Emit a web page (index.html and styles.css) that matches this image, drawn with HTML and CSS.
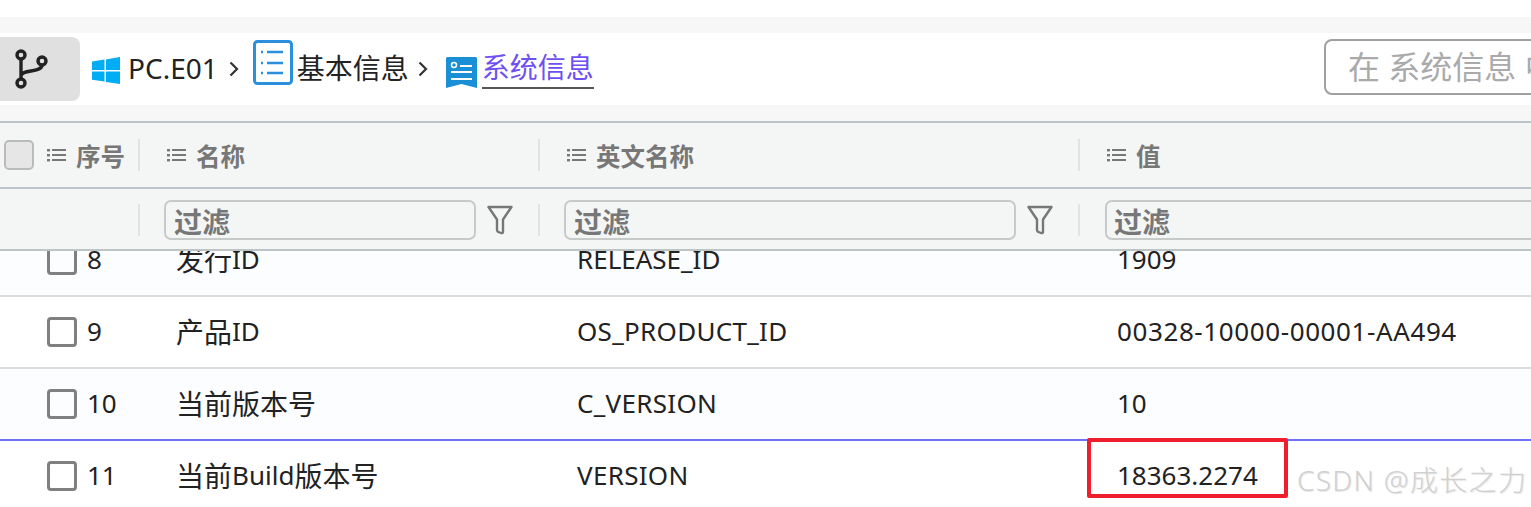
FILE: index.html
```html
<!DOCTYPE html>
<html>
  <head>
    <title>系统信息</title>
    <link rel="stylesheet" href="styles.css">
  </head>

  <body>
    <div class="toolbar">
      <div class="crumbs">
        <div class="branch-btn">
          <svg width="36" height="40" viewBox="0 0 36 40" fill="none" stroke="#222" stroke-width="3.4">
            <circle cx="8" cy="6" r="4" />
            <circle cx="8" cy="34" r="4" />
            <circle cx="29" cy="12" r="4" />
            <path d="M8 10V30M8 27C8 20 29 24 29 16" />
          </svg>
        </div>
        <svg class="win-icon" width="28" height="27" viewBox="0 0 28 27" fill="#00adf5">
          <path d="M0 4.5L12.5 2.6V13H0ZM14 2.4L28 0V13H14ZM0 14.5H12.5V24.6L0 22.8ZM14 14.5H28V27L14 25Z" />
        </svg>
        <span class="crumb">PC.E01</span>
        <svg class="chevron" width="10" height="16" viewBox="0 0 10 16" fill="none" stroke="#333" stroke-width="2.2">
          <path d="M1.5 1.5L8 8L1.5 14.5" />
        </svg>
        <svg class="list-icon" width="40" height="45" viewBox="0 0 40 45" fill="none" stroke="#2a8fdc">
          <rect x="1.5" y="1.5" width="37" height="42" rx="3" stroke-width="3" />
          <path d="M14 12H30M14 23H30M14 33H30" stroke-width="2.4" />
          <path d="M8 12H10M8 23H10M8 33H10" stroke-width="2.4" />
        </svg>
        <span class="crumb">基本信息</span>
        <svg class="chevron chevron-2" width="10" height="16" viewBox="0 0 10 16" fill="none" stroke="#333" stroke-width="2.2">
          <path d="M1.5 1.5L8 8L1.5 14.5" />
        </svg>
        <svg class="card-icon" width="31" height="31" viewBox="0 0 31 31">
          <path d="M0 1.5Q0 0 1.5 0H29.5Q31 0 31 1.5V31L15.500 27L0 31Z" fill="#1a8fd6" />
          <circle cx="8" cy="8" r="2.500" fill="none" stroke="#fff" stroke-width="1.500" />
          <path d="M14 9H26M5 15H26M5 22H26" stroke="#fff" stroke-width="1.800" />
        </svg>
        <span class="crumb current">系统信息</span>
      </div>
      <div class="search">在 系统信息 中搜索</div>
    </div>

    <div class="table">
      <div class="row head-row">
        <div class="cell first-cell">
          <span class="head-check"></span>
          <svg class="menu-icon" width="19" height="14" viewBox="0 0 19 14"><use href="#lines" /></svg>
          <span class="head-text">序号</span>
        </div>
        <div class="cell">
          <i class="sep"></i>
          <svg class="menu-icon pad" width="19" height="14" viewBox="0 0 19 14"><use href="#lines" /></svg>
          <span class="head-text">名称</span>
        </div>
        <div class="cell">
          <i class="sep"></i>
          <svg class="menu-icon pad" width="19" height="14" viewBox="0 0 19 14"><use href="#lines" /></svg>
          <span class="head-text">英文名称</span>
        </div>
        <div class="cell">
          <i class="sep"></i>
          <svg class="menu-icon pad" width="19" height="14" viewBox="0 0 19 14"><use href="#lines" /></svg>
          <span class="head-text">值</span>
        </div>
      </div>

      <div class="row filter-row">
        <div class="cell first-cell"></div>
        <div class="cell">
          <i class="sep"></i>
          <div class="filter-input">过滤</div>
          <svg class="funnel" width="26" height="30" viewBox="0 0 26 30"><use href="#funnel" /></svg>
        </div>
        <div class="cell">
          <i class="sep"></i>
          <div class="filter-input long">过滤</div>
          <svg class="funnel" width="26" height="30" viewBox="0 0 26 30"><use href="#funnel" /></svg>
        </div>
        <div class="cell">
          <i class="sep"></i>
          <div class="filter-input wide">过滤</div>
        </div>
      </div>

      <div class="rows">
        <div class="row data-row tint top-row">
          <div class="cell first-cell"><span class="check"></span><span class="en">8</span></div>
          <div class="cell text-cell">发行<span class="en">ID</span></div>
          <div class="cell text-cell en">RELEASE_ID</div>
          <div class="cell text-cell en">1909</div>
        </div>
        <div class="row data-row">
          <div class="cell first-cell"><span class="check"></span><span class="en">9</span></div>
          <div class="cell text-cell">产品<span class="en">ID</span></div>
          <div class="cell text-cell en loose">OS_PRODUCT_ID</div>
          <div class="cell text-cell en serial">00328-10000-00001-AA494</div>
        </div>
        <div class="row data-row tint hover">
          <div class="cell first-cell"><span class="check"></span><span class="en">10</span></div>
          <div class="cell text-cell">当前版本号</div>
          <div class="cell text-cell en loose">C_VERSION</div>
          <div class="cell text-cell en">10</div>
        </div>
        <div class="row data-row">
          <div class="cell first-cell"><span class="check"></span><span class="en">11</span></div>
          <div class="cell text-cell">当前<span class="en">Build</span>版本号</div>
          <div class="cell text-cell en loose">VERSION</div>
          <div class="cell text-cell en">18363.2274</div>
        </div>
      </div>
    </div>

    <div class="red-box"></div>
    <div class="watermark">CSDN @成长之力</div>

    <svg class="defs" width="0" height="0">
      <defs>
        <g id="lines" fill="#777">
          <rect x="0" y="1" width="3" height="2.400" />
          <rect x="0" y="6" width="3" height="2.400" />
          <rect x="0" y="11" width="3" height="2.400" />
          <rect x="5" y="1" width="14" height="2" />
          <rect x="5" y="6" width="14" height="2" />
          <rect x="5" y="11" width="14" height="2" />
        </g>
        <path id="funnel" d="M1.500 2H24.500L16 14.500V27Q16 28.500 14 28L11.500 27Q10 26.500 10 25V14.500Z" fill="none" stroke="#777" stroke-width="2.400" stroke-linejoin="round" />
      </defs>
    </svg>
  </body>
</html>
```

FILE: styles.css
```css
html,
body {
  margin: 0;
  height: 507px;
  overflow: hidden;
}

body {
  position: relative;
  padding-top: 17px;
  box-sizing: border-box;
  background: linear-gradient(#f7f7f7, #f7f7f7) 0 17px / 100% 104px no-repeat #fff;
  font-family: "Noto Sans", "Noto Sans CJK SC", sans-serif;
  font-size: 28px;
  color: #222;
}

.en {
  font-size: 26px;
}

.loose {
  letter-spacing: 0.3px;
}

.serial {
  letter-spacing: 0.6px;
}

.toolbar {
  display: flex;
  align-items: center;
  height: 72px;
  margin: 16px 0;
  background: #fff;
  overflow: hidden;
}

.crumbs {
  display: flex;
  flex: none;
  align-items: center;
  width: 1324px;
}

.branch-btn {
  display: flex;
  align-items: center;
  justify-content: center;
  width: 80px;
  height: 64px;
  padding-right: 18px;
  box-sizing: border-box;
  background: #e0e0e0;
  border-radius: 0 8px 8px 0;
}

.win-icon {
  margin: 2px 8px 0 12px;
}

.crumb {
  margin-bottom: 3px;
  line-height: 40px;
}

.chevron {
  margin: 0 14px 0 11px;
}

.chevron-2 {
  margin: 0 18px 0 9px;
}

.list-icon {
  margin-top: -13px;
  margin-right: 4px;
}

.card-icon {
  margin-top: 6px;
  margin-right: 5px;
}

.current {
  color: #6e50f2;
  border-bottom: 2px solid #555;
}

.search {
  flex: none;
  width: 300px;
  height: 56px;
  margin-bottom: 4px;
  padding-left: 22px;
  box-sizing: border-box;
  border: 2px solid #a0a0a0;
  border-radius: 8px;
  font-size: 32px;
  line-height: 52px;
  color: #aaa;
  white-space: nowrap;
  overflow: hidden;
}

.table {
  border-top: 2px solid #bcc4c6;
}

.row {
  display: grid;
  grid-template-columns: 138px 400px 540px 1fr;
}

.cell {
  display: flex;
  align-items: center;
  white-space: nowrap;
}

.head-row {
  height: 66px;
  box-sizing: border-box;
  background: #f4f6f5;
  border-bottom: 2px solid #bcc4c6;
}

.filter-row {
  height: 62px;
  padding-top: 2px;
  box-sizing: border-box;
  background: #f4f6f5;
  border-bottom: 2px solid #bcc4c6;
}

.sep {
  flex: none;
  width: 2px;
  height: 32px;
  background: #dfe3e2;
}

.head-check {
  flex: none;
  width: 26px;
  height: 26px;
  margin: 0 13px 0 4px;
  background: #e6e6e6;
  border: 2px solid #bbb;
  border-radius: 5px;
}

.menu-icon {
  flex: none;
  margin-right: 10px;
}

.menu-icon.pad {
  margin-left: 27px;
}

.head-text {
  font-size: 24.500px;
  font-weight: 700;
  color: #777;
}

.filter-input {
  flex: none;
  width: 312px;
  height: 40px;
  margin-left: 24px;
  padding-left: 8px;
  box-sizing: border-box;
  border: 2px solid #c6cbca;
  border-radius: 7px;
  font-weight: 700;
  line-height: 40px;
  color: #777;
}

.filter-input.long {
  width: 452px;
}

.filter-input.wide {
  width: 500px;
  margin-left: 25px;
  padding-left: 7px;
}

.funnel {
  flex: none;
  margin-left: 11px;
}

.rows {
  height: 256px;
  overflow: hidden;
}

.data-row {
  height: 72px;
  padding-bottom: 2px;
  box-sizing: border-box;
  background: #fff;
  border-bottom: 2px solid #dcdcdc;
}

.top-row {
  margin-top: -26px;
}

.tint {
  background: #fcfdff;
}

.hover {
  border-bottom-color: #6f6ffa;
}

.check {
  flex: none;
  width: 30px;
  height: 30px;
  margin: 2px 10px 0 47px;
  box-sizing: border-box;
  border: 3px solid #808080;
  border-radius: 4px;
}

.text-cell {
  padding-left: 38px;
}

.text-cell.en {
  padding-left: 39px;
}

.red-box {
  position: absolute;
  left: 1087px;
  top: 438px;
  width: 201px;
  height: 60px;
  box-sizing: border-box;
  border: 4px solid #f01e2c;
  border-radius: 2px;
}

.watermark {
  position: absolute;
  left: 1297px;
  top: 460px;
  font-size: 28px;
  font-weight: 300;
  letter-spacing: 1.300px;
  line-height: 40px;
  color: #d0d0d0;
  text-shadow: 1px 1px 1px #e6e6e6;
  white-space: nowrap;
}

.defs {
  position: absolute;
}
```
